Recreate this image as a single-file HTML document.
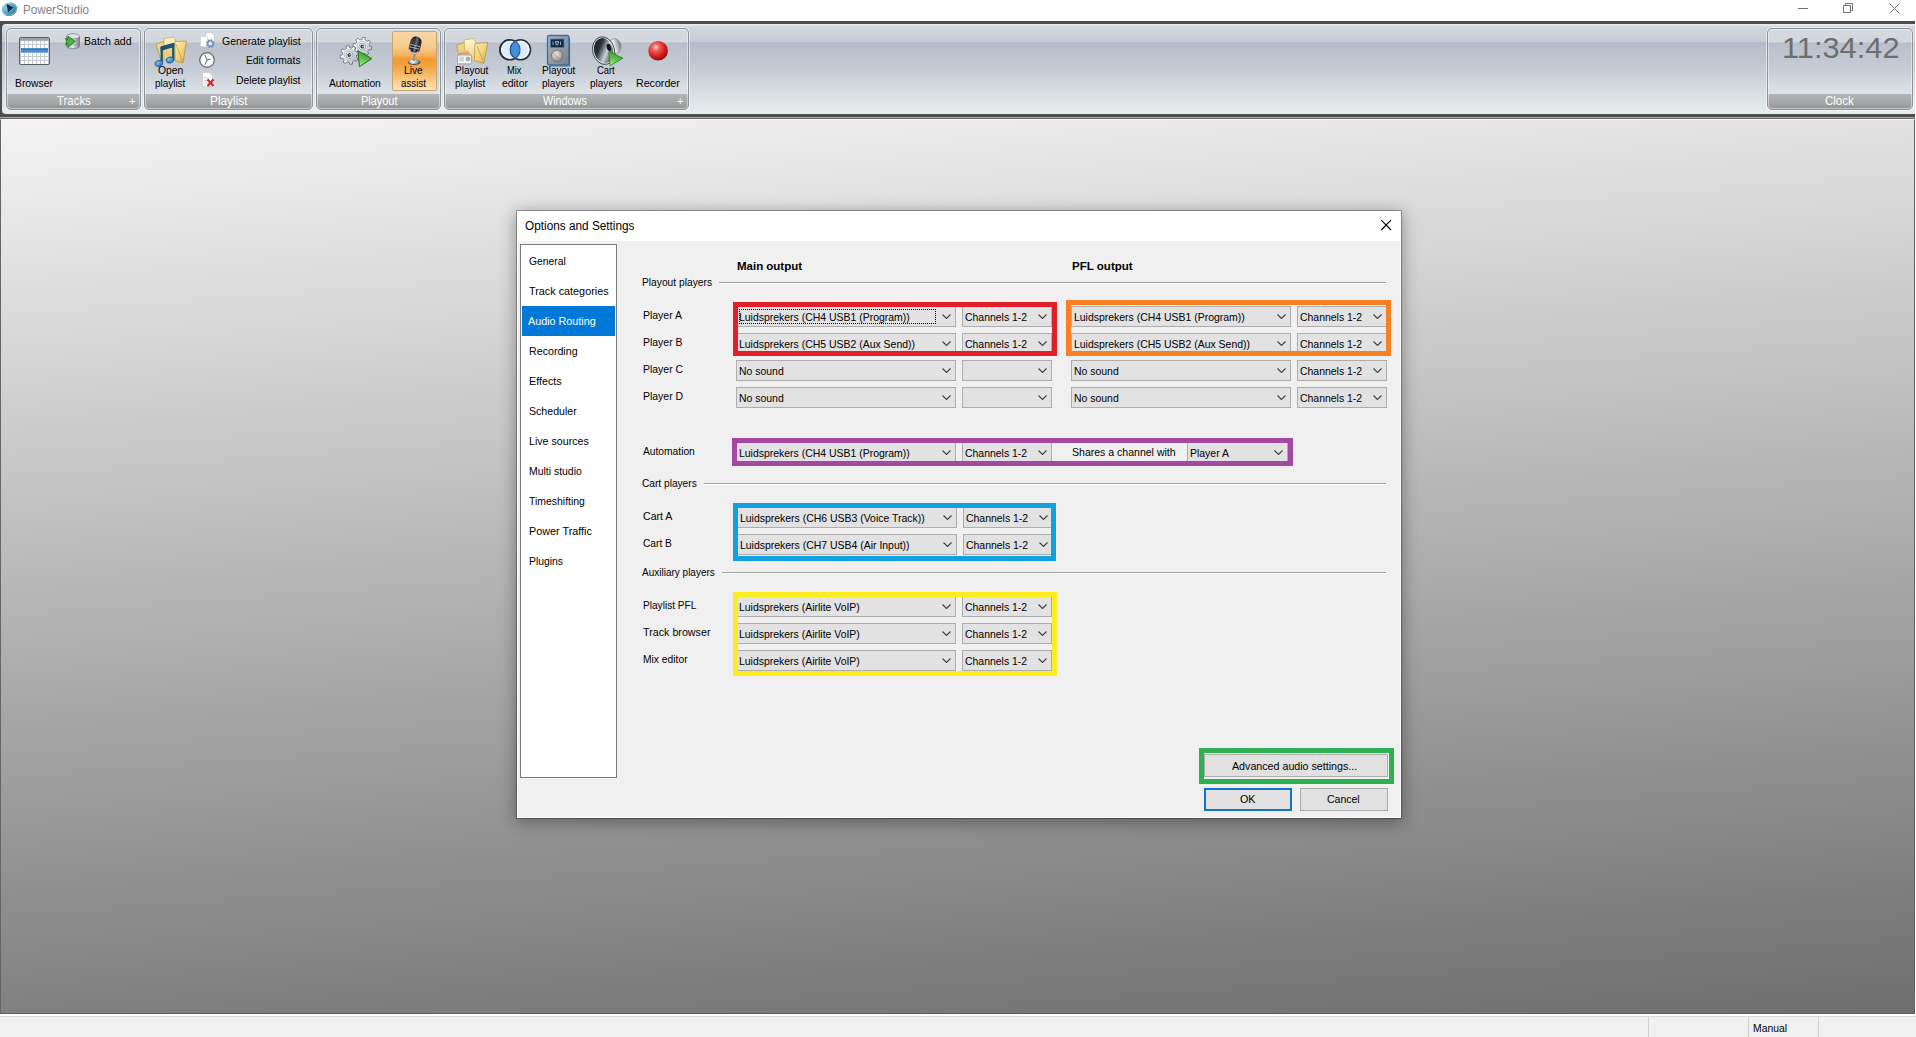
<!DOCTYPE html><html><head><meta charset="utf-8"><title>PowerStudio</title><style>
html,body{margin:0;padding:0}
body{width:1916px;height:1037px;overflow:hidden;background:#fff;position:relative;font-family:"Liberation Sans",sans-serif;font-size:11px}
.t{position:absolute;white-space:nowrap;transform-origin:0 50%}
.a{position:absolute}
#title{left:0;top:0;width:1916px;height:21px;background:#fff}
#rib0{left:0;top:21px;width:1915px;height:96px;background:#4c4d4e}
#rib1{left:2px;top:24px;width:1913px;height:90px;border-radius:4px 0 0 4px;background:linear-gradient(#eef0f2 0,#e2e4e8 1.5px,#d4d7de 2.5px,#c6cbd5 17.5px,#b4bbc8 18.5px,#c8cfd7 50px,#dce3e6 75px,#e8eeee 90px)}
.grp{position:absolute;top:28px;height:82px;box-sizing:border-box;border:1px solid #8d9398;border-radius:5px;background:linear-gradient(#d6d9e0 0,#d2d6dd 13px,#b9c0cb 14px,#c6ccd5 40px,#dde3e7 65px,#e0e6e9 66px);overflow:hidden;box-shadow:0 0 0 1px rgba(255,255,255,.55)}
.grp .cap{position:absolute;left:0;right:0;top:65px;height:16px;background:linear-gradient(#b3b5b6,#a5a7a8 50%,#8e9091)}
.grp:before{content:"";position:absolute;left:0;top:0;right:0;bottom:0;border:1px solid rgba(255,255,255,.45);border-radius:4px;z-index:1;pointer-events:none}
#line1{left:0;top:117px;width:1915px;height:1px;background:#a9a9a9}
#line2{left:0;top:118px;width:1915px;height:1px;background:#666}
#mdi{left:0;top:119px;width:1915px;height:895px;background:linear-gradient(175.8deg,#f4f4f4,#6e6e6e);box-sizing:border-box;border-left:1px solid #666;border-top:1px solid #fbfbfb;border-right:1px solid #626262;border-bottom:1px solid #5e5e5e}
#status{left:0;top:1014px;width:1916px;height:23px;background:linear-gradient(#fff 0,#fff 2px,#d9d9d9 2px,#d9d9d9 3px,#f0f0f0 3px)}
#dlg{left:516px;top:210px;width:886px;height:609px;background:#f0f0f0;box-sizing:border-box;border:1px solid rgba(0,0,0,.30);background-clip:padding-box;box-shadow:0 3px 15px 1px rgba(0,0,0,.32)}
#dtitle{left:0;top:0;width:884px;height:30px;background:#fff}
#dlgin{left:0;top:30px;width:884px;height:577px;box-sizing:border-box;border-right:1px solid #fff;border-bottom:1px solid #fff;border-left:1px solid #fff}
#lb{left:520px;top:244px;width:97px;height:534px;box-sizing:border-box;border:1px solid #7a7a7a;background:#fff}
.cb{position:absolute;height:21px;box-sizing:border-box;border:1px solid #adadad;background:#e2e2e2}
.cb svg{position:absolute;right:4px;top:7px}
.sep{position:absolute;height:1px;background:#a0a0a0;border-bottom:1px solid #fff}
.fr{position:absolute;box-sizing:border-box;border-style:solid;border-width:5px}
.btn{position:absolute;box-sizing:border-box;border:1px solid #adadad;background:#e1e1e1}
</style></head><body>
<div class="a" id="title"></div>
<svg class="a" style="left:0.5px;top:1px" width="17" height="16" viewBox="0 0 17 16"><defs><radialGradient id="lg" cx="40%" cy="35%" r="70%"><stop offset="0" stop-color="#9fd8ea"/><stop offset=".6" stop-color="#3f9ec0"/><stop offset="1" stop-color="#1c5f80"/></radialGradient></defs><ellipse cx="8.5" cy="8.2" rx="7.8" ry="6.6" fill="url(#lg)" transform="rotate(-20 8.5 8.2)"/><ellipse cx="8.5" cy="8.2" rx="7" ry="5.8" fill="none" stroke="#b8e4f2" stroke-width=".8" opacity=".7" transform="rotate(-20 8.5 8.2)"/><path d="M5.6 3 L12.4 6.600 L7 11.600 Z" fill="#1b2a36"/></svg>
<span class="t" style="left:22.50px;top:2.00px;font-size:12px;line-height:16px;color:#828282;transform:scaleX(0.9700);">PowerStudio</span>
<svg class="a" style="left:1780px;top:0" width="136" height="21" viewBox="0 0 136 21"><g stroke="#707070" stroke-width="1" fill="none"><path d="M18 8.5h10"/><path d="M63.5 5.5h7v7h-7z" fill="#fff"/><path d="M65.5 5.5v-2h7v7h-2"/><path d="M109.5 3.5l10 10M119.5 3.5l-10 10"/></g></svg>
<div class="a" id="rib0"></div><div class="a" id="rib1"></div>
<div class="grp" style="left:6px;width:135px"><div class="cap"></div></div><span class="t" style="left:56.60px;top:93.00px;font-size:12px;line-height:16px;color:#fff;transform:scaleX(0.9506);">Tracks</span><span class="t" style="left:129.09px;top:94.45px;font-size:11.5px;line-height:15px;color:#fff;transform:scaleX(0.9565);">+</span>
<div class="grp" style="left:144px;width:169px"><div class="cap"></div></div><span class="t" style="left:210.05px;top:93.00px;font-size:12px;line-height:16px;color:#fff;transform:scaleX(0.9866);">Playlist</span>
<div class="grp" style="left:316px;width:125px"><div class="cap"></div></div><span class="t" style="left:360.55px;top:93.00px;font-size:12px;line-height:16px;color:#fff;transform:scaleX(0.9119);">Playout</span>
<div class="grp" style="left:444px;width:245px"><div class="cap"></div></div><span class="t" style="left:543.20px;top:93.00px;font-size:12px;line-height:16px;color:#fff;transform:scaleX(0.8998);">Windows</span><span class="t" style="left:677.09px;top:94.45px;font-size:11.5px;line-height:15px;color:#fff;transform:scaleX(0.9565);">+</span>
<div class="grp" style="left:1767px;width:146px"><div class="cap"></div></div><span class="t" style="left:1825.00px;top:93.00px;font-size:12px;line-height:16px;color:#fff;transform:scaleX(0.9532);">Clock</span>
<div class="a" id="line1"></div><div class="a" id="line2"></div>
<div class="a" id="mdi"></div>
<div class="a" id="status"></div>
<span class="t" style="left:1753.40px;top:1020.55px;font-size:11.5px;line-height:15px;color:#000;transform:scaleX(0.9015);">Manual</span>
<div class="a" style="left:1648px;top:1017px;width:1px;height:20px;background:#d2d2d2"></div>
<div class="a" style="left:1748px;top:1017px;width:1px;height:20px;background:#d2d2d2"></div>
<div class="a" style="left:1818px;top:1017px;width:1px;height:20px;background:#d2d2d2"></div>
<span class="t" style="left:1782.25px;top:30.50px;font-size:30px;line-height:34px;color:#6e6e6e;transform:scaleX(1.0258);">11:34:42</span>
<span class="t" style="left:14.80px;top:75.95px;font-size:11.5px;line-height:15px;color:#000;transform:scaleX(0.9010);">Browser</span>
<span class="t" style="left:84.40px;top:34.45px;font-size:11.5px;line-height:15px;color:#000;transform:scaleX(0.9172);">Batch add</span>
<span class="t" style="left:157.65px;top:62.95px;font-size:11.5px;line-height:15px;color:#000;transform:scaleX(0.8994);">Open</span>
<span class="t" style="left:154.65px;top:75.95px;font-size:11.5px;line-height:15px;color:#000;transform:scaleX(0.8620);">playlist</span>
<span class="t" style="left:221.70px;top:33.95px;font-size:11.5px;line-height:15px;color:#000;transform:scaleX(0.9109);">Generate playlist</span>
<span class="t" style="left:245.80px;top:52.95px;font-size:11.5px;line-height:15px;color:#000;transform:scaleX(0.8883);">Edit formats</span>
<span class="t" style="left:235.80px;top:72.95px;font-size:11.5px;line-height:15px;color:#000;transform:scaleX(0.9010);">Delete playlist</span>
<span class="t" style="left:329.20px;top:75.95px;font-size:11.5px;line-height:15px;color:#000;transform:scaleX(0.8905);">Automation</span>
<div class="a" style="left:392px;top:31px;width:45px;height:60px;box-sizing:border-box;border:1px solid #c9a570;border-radius:2px;background:linear-gradient(#f9d6a8 0,#f8cb90 25%,#f5b360 40%,#f39a2e 47%,#f5a849 62%,#f9c882 82%,#fde2b2 100%)"></div>
<span class="t" style="left:404.40px;top:62.95px;font-size:11.5px;line-height:15px;color:#000;transform:scaleX(0.8912);">Live</span>
<span class="t" style="left:400.90px;top:75.95px;font-size:11.5px;line-height:15px;color:#000;transform:scaleX(0.8505);">assist</span>
<span class="t" style="left:454.50px;top:62.95px;font-size:11.5px;line-height:15px;color:#000;transform:scaleX(0.8708);">Playout</span>
<span class="t" style="left:455.45px;top:75.95px;font-size:11.5px;line-height:15px;color:#000;transform:scaleX(0.8620);">playlist</span>
<span class="t" style="left:507.30px;top:62.95px;font-size:11.5px;line-height:15px;color:#000;transform:scaleX(0.8052);">Mix</span>
<span class="t" style="left:501.50px;top:75.95px;font-size:11.5px;line-height:15px;color:#000;transform:scaleX(0.9039);">editor</span>
<span class="t" style="left:541.50px;top:62.95px;font-size:11.5px;line-height:15px;color:#000;transform:scaleX(0.8708);">Playout</span>
<span class="t" style="left:541.50px;top:75.95px;font-size:11.5px;line-height:15px;color:#000;transform:scaleX(0.8740);">players</span>
<span class="t" style="left:596.55px;top:62.95px;font-size:11.5px;line-height:15px;color:#000;transform:scaleX(0.8147);">Cart</span>
<span class="t" style="left:589.85px;top:75.95px;font-size:11.5px;line-height:15px;color:#000;transform:scaleX(0.8713);">players</span>
<span class="t" style="left:635.70px;top:75.95px;font-size:11.5px;line-height:15px;color:#000;transform:scaleX(0.9261);">Recorder</span>
<svg class="a" style="left:0;top:0" width="700" height="117" viewBox="0 0 700 117">
<defs>
<linearGradient id="gFold" x1="0" y1="0" x2="1" y2="1"><stop offset="0" stop-color="#fdf0b8"/><stop offset=".5" stop-color="#f3d27c"/><stop offset="1" stop-color="#d9a94a"/></linearGradient>
<linearGradient id="gFold2" x1="0" y1="0" x2="0" y2="1"><stop offset="0" stop-color="#fff6cf"/><stop offset="1" stop-color="#f0cf83"/></linearGradient>
<linearGradient id="gPlay" x1=".6" y1="0" x2=".2" y2="1"><stop offset="0" stop-color="#3d8f2e"/><stop offset=".5" stop-color="#5fbf48"/><stop offset="1" stop-color="#a6f08f"/></linearGradient>
<linearGradient id="gGear" x1="0" y1="0" x2="1" y2="1"><stop offset="0" stop-color="#ffffff"/><stop offset=".45" stop-color="#f2f4f6"/><stop offset="1" stop-color="#a3aebb"/></linearGradient>
<radialGradient id="gRec" cx="38%" cy="32%" r="70%"><stop offset="0" stop-color="#ffe3dc"/><stop offset=".25" stop-color="#f2655c"/><stop offset=".65" stop-color="#d81f1f"/><stop offset="1" stop-color="#8e0d0d"/></radialGradient>
<linearGradient id="gCone" x1="0" y1="0" x2="1" y2="1"><stop offset="0" stop-color="#0e1519"/><stop offset=".35" stop-color="#27333a"/><stop offset=".6" stop-color="#c9d0d3"/><stop offset=".8" stop-color="#59656b"/><stop offset="1" stop-color="#1a2226"/></linearGradient>
<linearGradient id="gSil" x1="0" y1="0" x2="1" y2="0"><stop offset="0" stop-color="#8d9599"/><stop offset=".4" stop-color="#f4f6f7"/><stop offset="1" stop-color="#6c7478"/></linearGradient>
<linearGradient id="gMic" x1="0" y1="0" x2="1" y2="0"><stop offset="0" stop-color="#54595c"/><stop offset=".3" stop-color="#15181a"/><stop offset=".55" stop-color="#6f777b"/><stop offset=".75" stop-color="#1a1d1f"/><stop offset="1" stop-color="#3a3f42"/></linearGradient>
<linearGradient id="gDev" x1="0" y1="0" x2="1" y2="1"><stop offset="0" stop-color="#a9b4c0"/><stop offset="1" stop-color="#76838f"/></linearGradient>
<radialGradient id="gKnob" cx="40%" cy="35%" r="70%"><stop offset="0" stop-color="#f1ede8"/><stop offset=".6" stop-color="#b3aca4"/><stop offset="1" stop-color="#7c766f"/></radialGradient>
<linearGradient id="gCyl" x1="0" y1="0" x2="1" y2="0"><stop offset="0" stop-color="#8e979b"/><stop offset=".45" stop-color="#e6eaec"/><stop offset="1" stop-color="#7a8387"/></linearGradient>
<radialGradient id="gNote" cx="40%" cy="35%" r="70%"><stop offset="0" stop-color="#7cc0ee"/><stop offset="1" stop-color="#2470b4"/></radialGradient>
</defs>

<!-- Browser grid -->
<g>
<rect x="19.5" y="37.5" width="30" height="27" rx="1.5" fill="#c3cbcf" stroke="#56626a"/>
<rect x="20" y="38" width="29" height="2.6" fill="#9aa3a8"/>
<g fill="#fbffff">
<path d="M21 41h3v3h-3zM25 41h3v3h-3zM29 41h3v3h-3zM33 41h3v3h-3zM37 41h3v3h-3zM41 41h3v3h-3zM45 41h3v3h-3z"/>
<path d="M21 45h3v3h-3zM25 45h3v3h-3zM29 45h3v3h-3zM33 45h3v3h-3zM37 45h3v3h-3zM41 45h3v3h-3zM45 45h3v3h-3z"/>
<path d="M21 53h3v3h-3zM25 53h3v3h-3zM29 53h3v3h-3zM33 53h3v3h-3zM37 53h3v3h-3zM41 53h3v3h-3zM45 53h3v3h-3z"/>
<path d="M21 57h3v3h-3zM25 57h3v3h-3zM29 57h3v3h-3zM33 57h3v3h-3zM37 57h3v3h-3zM41 57h3v3h-3zM45 57h3v3h-3z"/>
<path d="M21 61h3v3h-3zM25 61h3v3h-3zM29 61h3v3h-3zM33 61h3v3h-3zM37 61h3v3h-3zM41 61h3v3h-3zM45 61h3v3h-3z"/>
</g>
<rect x="21" y="48.5" width="27" height="4" fill="#418fd2"/>
<rect x="21" y="48.5" width="27" height="1" fill="#2c6aa8"/>
</g>

<!-- Batch add -->
<g>
<path d="M66.5 36.5v9.5c0 1.6 2.9 2.7 6.5 2.7s6.500-1.100 6.500-2.700v-9.500z" fill="url(#gCyl)" stroke="#6f787c" stroke-width=".8"/>
<ellipse cx="73" cy="36.300" rx="6.500" ry="2.600" fill="#dfe4e6" stroke="#7a8387" stroke-width=".8"/>
<path d="M68 40.500c1.500 1 8.500 1 10.500 0M68 44c1.500 1 8.500 1 10.500 0" stroke="#8a9397" stroke-width=".7" fill="none"/>
<path d="M65.500 38.500l2.500 1.200v-3.700l7 5.500-7 5.500v-3.600l-2.500 1.300 1.200-3.200z" fill="#4db63a" stroke="#1f7a18" stroke-width=".9" stroke-linejoin="round"/>
</g>

<!-- Open playlist folder -->
<g>
<path d="M156 44l8-2.500 2 17-5 2z" fill="#f1d283" stroke="#b9913f" stroke-width=".7"/>
<path d="M164 38.500l10-1.500 1.500 4 0 17-11.500 2z" fill="url(#gFold2)" stroke="#c9a552" stroke-width=".7"/>
<path d="M175 41.500l11.500-0.500-3.500 22-8-2.500z" fill="url(#gFold)" stroke="#b58d3a" stroke-width=".7"/>
<path d="M176 44l6.500 18" stroke="#c79d49" stroke-width=".8" fill="none"/>
<path d="M166 50l8-2v12l-8 1z" fill="#f3cd80"/>
<!-- note -->
<path d="M161.700 63v-15.700l11.500-3.300v16" stroke="#1d5670" stroke-width="2.300" fill="none" stroke-linejoin="round"/>
<path d="M160.600 46.800l13.700-3.900v4.200l-13.700 3.900z" fill="#1d5670"/>
<ellipse cx="158.800" cy="63.500" rx="3.900" ry="3" fill="url(#gNote)" stroke="#1b5a94" stroke-width=".7" transform="rotate(-15 158.800 63.500)"/>
<ellipse cx="170" cy="60" rx="3.900" ry="3" fill="url(#gNote)" stroke="#1b5a94" stroke-width=".7" transform="rotate(-15 170 60)"/>
</g>

<!-- Generate playlist: doc + gear -->
<g>
<path d="M205.500 32.500h6l3 3v8.500h-9z" fill="#fafbfc" stroke="#c4cad0" stroke-width=".7"/>
<path d="M200.500 36.500h7v10h-7z" fill="#ffffff" stroke="#ccd1d6" stroke-width=".7"/>
<circle cx="210.300" cy="43.500" r="3.300" fill="none" stroke="#6f8fb5" stroke-width="2.200" stroke-dasharray="1.500 1.090"/>
<circle cx="210.300" cy="43.500" r="2.600" fill="#dfe8f2" stroke="#6f8fb5" stroke-width="1.300"/>
<circle cx="210.300" cy="43.500" r=".9" fill="#fff"/>
</g>

<!-- Edit formats: clock -->
<g>
<circle cx="207" cy="60" r="7.300" fill="#f1f3f5" stroke="#5f676d" stroke-width="1.200"/>
<circle cx="207" cy="60" r="5.800" fill="#fff" opacity=".7"/>
<path d="M207 60l-2-5M207 60l3.500-.8M207 60l-2 4.500" stroke="#4a5055" stroke-width=".9" fill="none"/>
</g>

<!-- Delete playlist: doc + X -->
<g>
<path d="M202.500 72.500h6.500l3.500 3.500v10.500h-10z" fill="#fbfbfb" stroke="#c9c9c9" stroke-width=".7"/>
<path d="M204 78h5M204 80.500h3M204 83h3" stroke="#e2b9b9" stroke-width=".8"/>
<path d="M207.500 79.500l6 6.500M213.500 79.500l-6 6.500" stroke="#d21f1f" stroke-width="2"/>
</g>

<!-- Automation gears -->
<g>
<g transform="translate(362.3 46.7) rotate(10)">
<path d="M7.01 -1.63 L9.39 -1.41 L9.39 1.41 L7.01 1.63 L6.11 3.81 L7.64 5.64 L5.64 7.64 L3.81 6.11 L1.63 7.01 L1.41 9.39 L-1.41 9.39 L-1.63 7.01 L-3.81 6.11 L-5.64 7.64 L-7.64 5.64 L-6.11 3.81 L-7.01 1.63 L-9.39 1.41 L-9.39 -1.41 L-7.01 -1.63 L-6.11 -3.81 L-7.64 -5.64 L-5.64 -7.64 L-3.81 -6.11 L-1.63 -7.01 L-1.41 -9.39 L1.41 -9.39 L1.63 -7.01 L3.81 -6.11 L5.64 -7.64 L7.64 -5.64 L6.11 -3.81Z" fill="url(#gGear)" stroke="#5b656e" stroke-width=".8" stroke-linejoin="round" stroke-opacity=".85"/>
<circle r="5.300" fill="none" stroke="#bcc5ce" stroke-width="1.200"/>
<circle r="3.400" fill="#e6eaee" stroke="#8e98a1" stroke-width=".8"/>
<circle r="1.900" fill="#2f373f"/>
<circle cx=".6" cy="-.2" r=".8" fill="#cfd6dc"/>
</g>
<g transform="translate(349.4 55) rotate(-12)">
<path d="M7.01 -1.63 L9.39 -1.41 L9.39 1.41 L7.01 1.63 L6.11 3.81 L7.64 5.64 L5.64 7.64 L3.81 6.11 L1.63 7.01 L1.41 9.39 L-1.41 9.39 L-1.63 7.01 L-3.81 6.11 L-5.64 7.64 L-7.64 5.64 L-6.11 3.81 L-7.01 1.63 L-9.39 1.41 L-9.39 -1.41 L-7.01 -1.63 L-6.11 -3.81 L-7.64 -5.64 L-5.64 -7.64 L-3.81 -6.11 L-1.63 -7.01 L-1.41 -9.39 L1.41 -9.39 L1.63 -7.01 L3.81 -6.11 L5.64 -7.64 L7.64 -5.64 L6.11 -3.81Z" fill="url(#gGear)" stroke="#5b656e" stroke-width=".8" stroke-linejoin="round" stroke-opacity=".85"/>
<circle r="5.300" fill="none" stroke="#bcc5ce" stroke-width="1.200"/>
<circle r="3.400" fill="#e6eaee" stroke="#8e98a1" stroke-width=".8"/>
<circle r="1.900" fill="#2f373f"/>
<circle cx=".6" cy="-.2" r=".8" fill="#cfd6dc"/>
</g>
<path d="M357.800 50.700l14 7.900-12.300 8z" fill="url(#gPlay)" stroke="#216f14" stroke-width="1" stroke-linejoin="round"/>
</g>

<!-- Live assist mic -->
<g>
<ellipse cx="414.200" cy="62.300" rx="6.300" ry="2.700" fill="#4a4e51"/>
<ellipse cx="414" cy="61.600" rx="5.700" ry="2.200" fill="url(#gSil)"/>
<path d="M413.500 61l1.400-8" stroke="#8f9699" stroke-width="2"/>
<g transform="rotate(14 415 46)">
<rect x="409.800" y="36.800" width="10.400" height="17" rx="4.800" fill="url(#gMic)" stroke="#0e1012" stroke-width=".6"/>
<path d="M410 45.500h10M410 48h10" stroke="#a2a9ad" stroke-width="1"/>
<path d="M412.700 38.500v6M415 38v6.500M417.300 38.500v6" stroke="#5f676b" stroke-width=".6"/>
<path d="M410.500 50.500c.8 4 8.200 4 9 0" stroke="#c4cacd" stroke-width="1.500" fill="none"/>
</g>
</g>

<!-- Playout playlist folder + radio -->
<g>
<path d="M456.500 45l8-2.500 4 17-8 2z" fill="#f1d283" stroke="#b9913f" stroke-width=".7"/>
<path d="M464 40l9.500-1.500 2.500 4 1 17-11 2z" fill="url(#gFold2)" stroke="#c9a552" stroke-width=".7"/>
<path d="M475 43.500l12.800-1-4 21-9.500-3z" fill="url(#gFold)" stroke="#b58d3a" stroke-width=".7"/>
<path d="M477 46l6.500 16" stroke="#c79d49" stroke-width=".8" fill="none"/>
<path d="M458 52l10-2 7 10-8 3z" fill="#e9c572"/>
<rect x="457.500" y="55" width="14" height="9" rx="1.500" fill="#f4f6f8" stroke="#8e979e" stroke-width=".8"/>
<path d="M459 53.800l10-1" stroke="#8e979e" stroke-width=".8"/>
<rect x="459" y="56.500" width="5" height="5" fill="#cfd5da"/>
<circle cx="468" cy="59" r="2" fill="#9fb6cc" stroke="#7a8790" stroke-width=".5"/>
<path d="M459 63.500h11" stroke="#b4bcc2" stroke-width=".8"/>
</g>

<!-- Mix editor -->
<g>
<circle cx="509.900" cy="49.800" r="10" fill="#dcebf9" stroke="#27343f" stroke-width="1.600"/>
<circle cx="520.500" cy="49.800" r="10" fill="#dcebf9" stroke="#27343f" stroke-width="1.600"/>
<circle cx="509.900" cy="49.800" r="8.200" fill="none" stroke="#f6fbff" stroke-width="1.200"/>
<circle cx="520.500" cy="49.800" r="8.200" fill="none" stroke="#f6fbff" stroke-width="1.200"/>
<path d="M515.200 41.300a10 10 0 0 1 0 17a10 10 0 0 1 0-17z" fill="#3f90e2" stroke="#2a5f94" stroke-width="1.200"/>
<circle cx="509.900" cy="49.800" r="10" fill="none" stroke="#27343f" stroke-width="1.600" stroke-dasharray="0 17 31 100"/>
</g>

<!-- Playout players device -->
<g>
<rect x="547.500" y="35.500" width="21.500" height="29.500" rx="2" fill="url(#gDev)" stroke="#3f6e9f" stroke-width="1.300"/>
<path d="M569.500 38v28h-19" stroke="#2d5d8c" stroke-width="1.200" fill="none" opacity=".8"/>
<rect x="550.500" y="39" width="13.500" height="8.500" fill="#17283a" stroke="#4a7fb5" stroke-width=".8"/>
<path d="M553 41.500v3.500M555.500 41.500h3v1.700h-3zM555.500 44.800h3M560.500 41.500v3.500" stroke="#8fc0ea" stroke-width=".9" fill="none"/>
<circle cx="557.200" cy="56" r="5.800" fill="url(#gKnob)" stroke="#6e6963" stroke-width=".6"/>
<path d="M554 53.500l5 6" stroke="#8c857d" stroke-width=".7"/>
</g>

<!-- Cart players speaker + play -->
<g>
<ellipse cx="615" cy="46" rx="6" ry="7.500" fill="url(#gSil)" stroke="#7a8387" stroke-width=".6" transform="rotate(-15 615 46)"/>
<ellipse cx="603.600" cy="50.500" rx="10.100" ry="13.200" fill="url(#gCone)" stroke="#e3e7e9" stroke-width="1.100" transform="rotate(-15 604 50.500)"/>
<ellipse cx="603.600" cy="50.500" rx="10.900" ry="14" fill="none" stroke="#2a3338" stroke-width=".8" transform="rotate(-15 604 50.500)"/>
<ellipse cx="609" cy="47.500" rx="2.200" ry="3.800" fill="#11171b" transform="rotate(-15 609 47.500)"/>
<path d="M608.900 51.500l14 6.700-12.700 7.500z" fill="url(#gPlay)" stroke="#2b8a1e" stroke-width=".9" stroke-linejoin="round"/>
</g>

<!-- Recorder -->
<circle cx="658.100" cy="50.800" r="9.800" fill="url(#gRec)"/>
</svg>

<div class="a" id="dlg"><div class="a" id="dtitle"></div><div class="a" id="dlgin"></div></div>
<span class="t" style="left:525.10px;top:218.00px;font-size:12px;line-height:16px;color:#000;transform:scaleX(0.9829);">Options and Settings</span>
<svg class="a" style="left:1380px;top:219px" width="13" height="13" viewBox="0 0 13 13"><path d="M1.200 1.200l9.800 9.800M11 1.200l-9.800 9.800" stroke="#000" stroke-width="1.150" fill="none"/></svg>
<div class="a" id="lb"></div>
<span class="t" style="left:528.80px;top:253.95px;font-size:11.5px;line-height:15px;color:#000;transform:scaleX(0.8971);">General</span>
<span class="t" style="left:528.80px;top:283.95px;font-size:11.5px;line-height:15px;color:#000;transform:scaleX(0.9412);">Track categories</span>
<div class="a" style="left:522px;top:306px;width:93px;height:30px;background:#0078d7"></div>
<span class="t" style="left:528.20px;top:313.95px;font-size:11.5px;line-height:15px;color:#fff;transform:scaleX(0.9371);">Audio Routing</span>
<span class="t" style="left:528.80px;top:343.95px;font-size:11.5px;line-height:15px;color:#000;transform:scaleX(0.9272);">Recording</span>
<span class="t" style="left:528.80px;top:373.95px;font-size:11.5px;line-height:15px;color:#000;transform:scaleX(0.9358);">Effects</span>
<span class="t" style="left:528.80px;top:403.95px;font-size:11.5px;line-height:15px;color:#000;transform:scaleX(0.9212);">Scheduler</span>
<span class="t" style="left:528.80px;top:433.95px;font-size:11.5px;line-height:15px;color:#000;transform:scaleX(0.9263);">Live sources</span>
<span class="t" style="left:528.80px;top:463.95px;font-size:11.5px;line-height:15px;color:#000;transform:scaleX(0.9078);">Multi studio</span>
<span class="t" style="left:528.80px;top:493.95px;font-size:11.5px;line-height:15px;color:#000;transform:scaleX(0.9080);">Timeshifting</span>
<span class="t" style="left:528.80px;top:523.95px;font-size:11.5px;line-height:15px;color:#000;transform:scaleX(0.9403);">Power Traffic</span>
<span class="t" style="left:528.80px;top:553.95px;font-size:11.5px;line-height:15px;color:#000;transform:scaleX(0.9015);">Plugins</span>
<span class="t" style="left:737.00px;top:258.95px;font-size:11.5px;line-height:15px;color:#000;transform:scaleX(0.9977);font-weight:bold;">Main output</span>
<span class="t" style="left:1072.40px;top:258.95px;font-size:11.5px;line-height:15px;color:#000;transform:scaleX(1.0039);font-weight:bold;">PFL output</span>
<span class="t" style="left:641.90px;top:274.95px;font-size:11.5px;line-height:15px;color:#000;transform:scaleX(0.8903);">Playout players</span><div class="sep" style="left:719px;top:282px;width:667px"></div>
<span class="t" style="left:641.90px;top:475.95px;font-size:11.5px;line-height:15px;color:#000;transform:scaleX(0.8824);">Cart players</span><div class="sep" style="left:704px;top:483px;width:682px"></div>
<span class="t" style="left:641.90px;top:564.95px;font-size:11.5px;line-height:15px;color:#000;transform:scaleX(0.8696);">Auxiliary players</span><div class="sep" style="left:722px;top:572px;width:664px"></div>
<span class="t" style="left:643.00px;top:307.95px;font-size:11.5px;line-height:15px;color:#000;transform:scaleX(0.9087);">Player A</span>
<div class="cb" style="left:736px;top:306px;width:220px"><svg width="9" height="5" viewBox="0 0 9 5"><path d="M.5 .5l4 4 4-4" stroke="#404040" stroke-width="1.1" fill="none"/></svg></div><span class="t" style="left:739.40px;top:309.95px;font-size:11.5px;line-height:15px;color:#000;transform:scaleX(0.9087);">Luidsprekers (CH4 USB1 (Program))</span>
<div class="cb" style="left:962px;top:306px;width:90px"><svg width="9" height="5" viewBox="0 0 9 5"><path d="M.5 .5l4 4 4-4" stroke="#404040" stroke-width="1.1" fill="none"/></svg></div><span class="t" style="left:965.40px;top:309.95px;font-size:11.5px;line-height:15px;color:#000;transform:scaleX(0.9087);">Channels 1-2</span>
<div class="cb" style="left:1071px;top:306px;width:220px"><svg width="9" height="5" viewBox="0 0 9 5"><path d="M.5 .5l4 4 4-4" stroke="#404040" stroke-width="1.1" fill="none"/></svg></div><span class="t" style="left:1074.40px;top:309.95px;font-size:11.5px;line-height:15px;color:#000;transform:scaleX(0.9087);">Luidsprekers (CH4 USB1 (Program))</span>
<div class="cb" style="left:1297px;top:306px;width:90px"><svg width="9" height="5" viewBox="0 0 9 5"><path d="M.5 .5l4 4 4-4" stroke="#404040" stroke-width="1.1" fill="none"/></svg></div><span class="t" style="left:1300.40px;top:309.95px;font-size:11.5px;line-height:15px;color:#000;transform:scaleX(0.9087);">Channels 1-2</span>
<span class="t" style="left:643.00px;top:334.95px;font-size:11.5px;line-height:15px;color:#000;transform:scaleX(0.9087);">Player B</span>
<div class="cb" style="left:736px;top:333px;width:220px"><svg width="9" height="5" viewBox="0 0 9 5"><path d="M.5 .5l4 4 4-4" stroke="#404040" stroke-width="1.1" fill="none"/></svg></div><span class="t" style="left:739.40px;top:336.95px;font-size:11.5px;line-height:15px;color:#000;transform:scaleX(0.9087);">Luidsprekers (CH5 USB2 (Aux Send))</span>
<div class="cb" style="left:962px;top:333px;width:90px"><svg width="9" height="5" viewBox="0 0 9 5"><path d="M.5 .5l4 4 4-4" stroke="#404040" stroke-width="1.1" fill="none"/></svg></div><span class="t" style="left:965.40px;top:336.95px;font-size:11.5px;line-height:15px;color:#000;transform:scaleX(0.9087);">Channels 1-2</span>
<div class="cb" style="left:1071px;top:333px;width:220px"><svg width="9" height="5" viewBox="0 0 9 5"><path d="M.5 .5l4 4 4-4" stroke="#404040" stroke-width="1.1" fill="none"/></svg></div><span class="t" style="left:1074.40px;top:336.95px;font-size:11.5px;line-height:15px;color:#000;transform:scaleX(0.9087);">Luidsprekers (CH5 USB2 (Aux Send))</span>
<div class="cb" style="left:1297px;top:333px;width:90px"><svg width="9" height="5" viewBox="0 0 9 5"><path d="M.5 .5l4 4 4-4" stroke="#404040" stroke-width="1.1" fill="none"/></svg></div><span class="t" style="left:1300.40px;top:336.95px;font-size:11.5px;line-height:15px;color:#000;transform:scaleX(0.9087);">Channels 1-2</span>
<span class="t" style="left:643.00px;top:361.95px;font-size:11.5px;line-height:15px;color:#000;transform:scaleX(0.9087);">Player C</span>
<div class="cb" style="left:736px;top:360px;width:220px"><svg width="9" height="5" viewBox="0 0 9 5"><path d="M.5 .5l4 4 4-4" stroke="#404040" stroke-width="1.1" fill="none"/></svg></div><span class="t" style="left:739.40px;top:363.95px;font-size:11.5px;line-height:15px;color:#000;transform:scaleX(0.9087);">No sound</span>
<div class="cb" style="left:962px;top:360px;width:90px"><svg width="9" height="5" viewBox="0 0 9 5"><path d="M.5 .5l4 4 4-4" stroke="#404040" stroke-width="1.1" fill="none"/></svg></div>
<div class="cb" style="left:1071px;top:360px;width:220px"><svg width="9" height="5" viewBox="0 0 9 5"><path d="M.5 .5l4 4 4-4" stroke="#404040" stroke-width="1.1" fill="none"/></svg></div><span class="t" style="left:1074.40px;top:363.95px;font-size:11.5px;line-height:15px;color:#000;transform:scaleX(0.9087);">No sound</span>
<div class="cb" style="left:1297px;top:360px;width:90px"><svg width="9" height="5" viewBox="0 0 9 5"><path d="M.5 .5l4 4 4-4" stroke="#404040" stroke-width="1.1" fill="none"/></svg></div><span class="t" style="left:1300.40px;top:363.95px;font-size:11.5px;line-height:15px;color:#000;transform:scaleX(0.9087);">Channels 1-2</span>
<span class="t" style="left:643.00px;top:388.95px;font-size:11.5px;line-height:15px;color:#000;transform:scaleX(0.9087);">Player D</span>
<div class="cb" style="left:736px;top:387px;width:220px"><svg width="9" height="5" viewBox="0 0 9 5"><path d="M.5 .5l4 4 4-4" stroke="#404040" stroke-width="1.1" fill="none"/></svg></div><span class="t" style="left:739.40px;top:390.95px;font-size:11.5px;line-height:15px;color:#000;transform:scaleX(0.9087);">No sound</span>
<div class="cb" style="left:962px;top:387px;width:90px"><svg width="9" height="5" viewBox="0 0 9 5"><path d="M.5 .5l4 4 4-4" stroke="#404040" stroke-width="1.1" fill="none"/></svg></div>
<div class="cb" style="left:1071px;top:387px;width:220px"><svg width="9" height="5" viewBox="0 0 9 5"><path d="M.5 .5l4 4 4-4" stroke="#404040" stroke-width="1.1" fill="none"/></svg></div><span class="t" style="left:1074.40px;top:390.95px;font-size:11.5px;line-height:15px;color:#000;transform:scaleX(0.9087);">No sound</span>
<div class="cb" style="left:1297px;top:387px;width:90px"><svg width="9" height="5" viewBox="0 0 9 5"><path d="M.5 .5l4 4 4-4" stroke="#404040" stroke-width="1.1" fill="none"/></svg></div><span class="t" style="left:1300.40px;top:390.95px;font-size:11.5px;line-height:15px;color:#000;transform:scaleX(0.9087);">Channels 1-2</span>
<div class="a" style="left:739px;top:309px;width:197px;height:15px;box-sizing:border-box;border:1px dotted #000"></div>
<span class="t" style="left:643.40px;top:443.95px;font-size:11.5px;line-height:15px;color:#000;transform:scaleX(0.8905);">Automation</span>
<div class="cb" style="left:736px;top:442px;width:220px"><svg width="9" height="5" viewBox="0 0 9 5"><path d="M.5 .5l4 4 4-4" stroke="#404040" stroke-width="1.1" fill="none"/></svg></div><span class="t" style="left:739.40px;top:445.95px;font-size:11.5px;line-height:15px;color:#000;transform:scaleX(0.9087);">Luidsprekers (CH4 USB1 (Program))</span>
<div class="cb" style="left:962px;top:442px;width:90px"><svg width="9" height="5" viewBox="0 0 9 5"><path d="M.5 .5l4 4 4-4" stroke="#404040" stroke-width="1.1" fill="none"/></svg></div><span class="t" style="left:965.40px;top:445.95px;font-size:11.5px;line-height:15px;color:#000;transform:scaleX(0.9087);">Channels 1-2</span>
<span class="t" style="left:1072.40px;top:444.95px;font-size:11.5px;line-height:15px;color:#000;transform:scaleX(0.9156);">Shares a channel with</span>
<div class="cb" style="left:1187px;top:442px;width:101px"><svg width="9" height="5" viewBox="0 0 9 5"><path d="M.5 .5l4 4 4-4" stroke="#404040" stroke-width="1.1" fill="none"/></svg></div><span class="t" style="left:1190.40px;top:445.95px;font-size:11.5px;line-height:15px;color:#000;transform:scaleX(0.9087);">Player A</span>
<span class="t" style="left:643.40px;top:508.95px;font-size:11.5px;line-height:15px;color:#000;transform:scaleX(0.9200);">Cart A</span>
<div class="cb" style="left:737px;top:507px;width:220px"><svg width="9" height="5" viewBox="0 0 9 5"><path d="M.5 .5l4 4 4-4" stroke="#404040" stroke-width="1.1" fill="none"/></svg></div><span class="t" style="left:740.40px;top:510.95px;font-size:11.5px;line-height:15px;color:#000;transform:scaleX(0.9087);">Luidsprekers (CH6 USB3 (Voice Track))</span>
<div class="cb" style="left:963px;top:507px;width:90px"><svg width="9" height="5" viewBox="0 0 9 5"><path d="M.5 .5l4 4 4-4" stroke="#404040" stroke-width="1.1" fill="none"/></svg></div><span class="t" style="left:966.40px;top:510.95px;font-size:11.5px;line-height:15px;color:#000;transform:scaleX(0.9087);">Channels 1-2</span>
<span class="t" style="left:643.40px;top:535.95px;font-size:11.5px;line-height:15px;color:#000;transform:scaleX(0.8868);">Cart B</span>
<div class="cb" style="left:737px;top:534px;width:220px"><svg width="9" height="5" viewBox="0 0 9 5"><path d="M.5 .5l4 4 4-4" stroke="#404040" stroke-width="1.1" fill="none"/></svg></div><span class="t" style="left:740.40px;top:537.95px;font-size:11.5px;line-height:15px;color:#000;transform:scaleX(0.9087);">Luidsprekers (CH7 USB4 (Air Input))</span>
<div class="cb" style="left:963px;top:534px;width:90px"><svg width="9" height="5" viewBox="0 0 9 5"><path d="M.5 .5l4 4 4-4" stroke="#404040" stroke-width="1.1" fill="none"/></svg></div><span class="t" style="left:966.40px;top:537.95px;font-size:11.5px;line-height:15px;color:#000;transform:scaleX(0.9087);">Channels 1-2</span>
<span class="t" style="left:643.40px;top:597.95px;font-size:11.5px;line-height:15px;color:#000;transform:scaleX(0.8779);">Playlist PFL</span>
<div class="cb" style="left:736px;top:596px;width:220px"><svg width="9" height="5" viewBox="0 0 9 5"><path d="M.5 .5l4 4 4-4" stroke="#404040" stroke-width="1.1" fill="none"/></svg></div><span class="t" style="left:739.40px;top:599.95px;font-size:11.5px;line-height:15px;color:#000;transform:scaleX(0.9087);">Luidsprekers (Airlite VoIP)</span>
<div class="cb" style="left:962px;top:596px;width:90px"><svg width="9" height="5" viewBox="0 0 9 5"><path d="M.5 .5l4 4 4-4" stroke="#404040" stroke-width="1.1" fill="none"/></svg></div><span class="t" style="left:965.40px;top:599.95px;font-size:11.5px;line-height:15px;color:#000;transform:scaleX(0.9087);">Channels 1-2</span>
<span class="t" style="left:643.40px;top:624.95px;font-size:11.5px;line-height:15px;color:#000;transform:scaleX(0.9321);">Track browser</span>
<div class="cb" style="left:736px;top:623px;width:220px"><svg width="9" height="5" viewBox="0 0 9 5"><path d="M.5 .5l4 4 4-4" stroke="#404040" stroke-width="1.1" fill="none"/></svg></div><span class="t" style="left:739.40px;top:626.95px;font-size:11.5px;line-height:15px;color:#000;transform:scaleX(0.9087);">Luidsprekers (Airlite VoIP)</span>
<div class="cb" style="left:962px;top:623px;width:90px"><svg width="9" height="5" viewBox="0 0 9 5"><path d="M.5 .5l4 4 4-4" stroke="#404040" stroke-width="1.1" fill="none"/></svg></div><span class="t" style="left:965.40px;top:626.95px;font-size:11.5px;line-height:15px;color:#000;transform:scaleX(0.9087);">Channels 1-2</span>
<span class="t" style="left:643.40px;top:651.95px;font-size:11.5px;line-height:15px;color:#000;transform:scaleX(0.8948);">Mix editor</span>
<div class="cb" style="left:736px;top:650px;width:220px"><svg width="9" height="5" viewBox="0 0 9 5"><path d="M.5 .5l4 4 4-4" stroke="#404040" stroke-width="1.1" fill="none"/></svg></div><span class="t" style="left:739.40px;top:653.95px;font-size:11.5px;line-height:15px;color:#000;transform:scaleX(0.9087);">Luidsprekers (Airlite VoIP)</span>
<div class="cb" style="left:962px;top:650px;width:90px"><svg width="9" height="5" viewBox="0 0 9 5"><path d="M.5 .5l4 4 4-4" stroke="#404040" stroke-width="1.1" fill="none"/></svg></div><span class="t" style="left:965.40px;top:653.95px;font-size:11.5px;line-height:15px;color:#000;transform:scaleX(0.9087);">Channels 1-2</span>
<div class="fr" style="left:733px;top:302px;width:324px;height:54px;border-color:#e31e26"></div>
<div class="fr" style="left:1066px;top:300px;width:325px;height:56px;border-color:#f58026"></div>
<div class="fr" style="left:732px;top:438px;width:561px;height:28px;border-color:#a349a4"></div>
<div class="fr" style="left:733px;top:503px;width:323px;height:58px;border-color:#12a1e0"></div>
<div class="fr" style="left:733px;top:592px;width:324px;height:84px;border-color:#fbee1c"></div>
<div class="fr" style="left:1199px;top:748px;width:195px;height:36px;border-color:#2db050"></div>
<div class="btn" style="left:1204px;top:754px;width:184px;height:23px"></div>
<span class="t" style="left:1232.20px;top:758.55px;font-size:11.5px;line-height:15px;color:#000;transform:scaleX(0.9282);">Advanced audio settings...</span>
<div class="btn" style="left:1204px;top:788px;width:88px;height:23px;border:2px solid #1573cc"></div>
<span class="t" style="left:1239.65px;top:792.45px;font-size:11.5px;line-height:15px;color:#000;transform:scaleX(0.9329);">OK</span>
<div class="btn" style="left:1300px;top:788px;width:88px;height:23px"></div>
<span class="t" style="left:1326.65px;top:792.45px;font-size:11.5px;line-height:15px;color:#000;transform:scaleX(0.9135);">Cancel</span>
</body></html>
